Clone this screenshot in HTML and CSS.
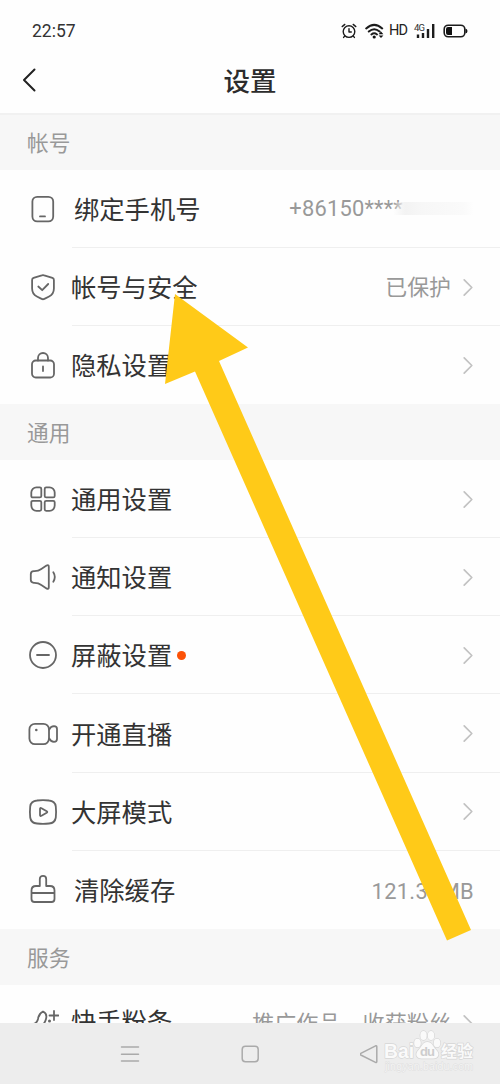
FILE: index.html
```html
<!DOCTYPE html>
<html lang="zh-CN">
<head>
<meta charset="utf-8">
<title>设置</title>
<link rel="stylesheet" href="styles.css">
</head>
<body>
<div class="screen">
  <header class="status">
    <span class="clock">22:57</span>
    <div class="status-icons">
      <svg class="alarm" width="16" height="16" viewBox="0 0 16 16"><circle cx="8" cy="8.6" r="5.8"/><path d="M8 5.6v3.4h2.3M1.2 3.6l2.6-2.2M14.8 3.6l-2.6-2.2M3.8 13l-1.2 1.4M12.2 13l1.2 1.4"/></svg>
      <svg class="wifi" width="20" height="16" viewBox="0 0 20 16"><path d="M1.200 5.400q8-7 16 0M3.800 8.500q5.400-4.500 10.800 0M6.400 11.400q2.800-2.300 5.600 0"/><circle class="solid" cx="9.200" cy="14" r="1.600"/><path class="solid" d="M13.600 11.200l2.400-2.700 2.400 2.700zM13.600 12.400l2.400 2.700 2.400-2.700z"/></svg>
      <span class="hd">HD</span>
      <div class="mobile"><span class="g4">4G</span><svg width="22" height="16" viewBox="0 0 22 16"><path d="M4 11.500v3.500M9 10v5M14 6v9M19.200 1v14"/></svg></div>
      <svg class="battery" width="25" height="14" viewBox="0 0 25 14"><rect x="1.200" y="1.200" width="20.600" height="11.600" rx="4"/><path class="solid" d="M5 3h4v8H5a2 2 0 0 1-2-2V5a2 2 0 0 1 2-2zM22.500 4.500q2 .5 2 2.500t-2 2.500z"/></svg>
    </div>
  </header>
  <div class="titlebar">
    <svg class="back" width="16" height="26" viewBox="0 0 16 26"><path d="M12.500 2.500L2 13l10.500 10.500"/></svg>
    <h1 class="title">设置</h1>
  </div>

  <h2 class="section first">帐号</h2>
  <div class="group">
    <div class="row shifted">
      <svg class="icon" viewBox="0 0 32 32"><rect x="5.400" y="3.800" width="20.800" height="24.600" rx="4.800"/><path d="M13 23.400h5"/></svg>
      <div class="cell"><span class="label">绑定手机号</span><span class="value phone">+86150****<i class="smear"></i></span></div>
    </div>
    <div class="row">
      <svg class="icon" viewBox="0 0 32 32"><path d="M14.800 4.300q1.200-.5 2.400 0l8.200 2.600q1.500.5 1.500 2v8.600q0 5.500-4.800 8l-4.700 2.400q-1.400.7-2.800 0l-4.700-2.400q-4.800-2.500-4.800-8V8.900q0-1.500 1.500-2z"/><path d="M11.300 15.500l3.900 3.700 6-6.200"/></svg>
      <div class="cell"><span class="label">帐号与安全</span><span class="value">已保护</span><svg class="chev" viewBox="0 0 12 20"><path d="M2 2l8 8-8 8"/></svg></div>
    </div>
    <div class="row">
      <svg class="icon" viewBox="0 0 32 32"><rect x="5" y="11.500" width="22" height="17" rx="3.800"/><path d="M11 11.500V9a5 5 0 0 1 10 0v2.500M16 17.500v4.500"/></svg>
      <div class="cell"><span class="label">隐私设置</span><svg class="chev" viewBox="0 0 12 20"><path d="M2 2l8 8-8 8"/></svg></div>
    </div>
  </div>

  <h2 class="section">通用</h2>
  <div class="group general">
    <div class="row">
      <svg class="icon" viewBox="0 0 32 32"><path d="M9.500 4.400h3.300q1.500 0 1.500 1.500v7q0 1.500-1.500 1.500h-7q-1.500 0-1.500-1.500V9.600a5.200 5.200 0 0 1 5.200-5.200zM22.500 4.400h-3.300q-1.500 0-1.500 1.500v7q0 1.500 1.500 1.500h7q1.500 0 1.500-1.500V9.600a5.200 5.200 0 0 0-5.200-5.200zM9.500 27.800h3.300q1.500 0 1.500-1.500v-7q0-1.500-1.500-1.500h-7q-1.500 0-1.500 1.500v3.300a5.200 5.200 0 0 0 5.200 5.200zM22.500 27.800h-3.300q-1.500 0-1.500-1.500v-7q0-1.500 1.500-1.500h7q1.500 0 1.500 1.500v3.300a5.200 5.200 0 0 1-5.200 5.200z"/></svg>
      <div class="cell"><span class="label">通用设置</span><svg class="chev" viewBox="0 0 12 20"><path d="M2 2l8 8-8 8"/></svg></div>
    </div>
    <div class="row">
      <svg class="icon" viewBox="0 0 32 32"><path d="M6.800 10.200q4.500.2 7.500-2.200l5.200-3.400q2.300-1.200 2.300 1.200v20.400q0 2.400-2.300 1.200L14.300 24q-3-2.400-7.500-2.200-3-.3-3-2.800v-6q0-2.500 3-2.800zM26.300 11.300q3 4.700 0 9.400"/></svg>
      <div class="cell"><span class="label">通知设置</span><svg class="chev" viewBox="0 0 12 20"><path d="M2 2l8 8-8 8"/></svg></div>
    </div>
    <div class="row">
      <svg class="icon" viewBox="0 0 32 32"><circle cx="16" cy="16" r="13"/><path d="M10 16h12"/></svg>
      <div class="cell"><span class="label">屏蔽设置</span><span class="dot"></span><svg class="chev" viewBox="0 0 12 20"><path d="M2 2l8 8-8 8"/></svg></div>
    </div>
    <div class="row">
      <svg class="icon" viewBox="0 0 32 32"><rect x="2.400" y="5.800" width="19.600" height="20.400" rx="5.600"/><path d="M22.200 11.500q1.500-3 4.800-3.300 3 0 3 2.800v10q0 2.800-3 2.800-3.300-.3-4.800-3.300"/><circle class="solid" cx="9.300" cy="12" r="1.300"/></svg>
      <div class="cell"><span class="label">开通直播</span><svg class="chev" viewBox="0 0 12 20"><path d="M2 2l8 8-8 8"/></svg></div>
    </div>
    <div class="row">
      <svg class="icon" viewBox="0 0 32 32"><path d="M10 4.500q6-.7 12 0 6 .5 6.800 6 .6 5.500 0 11-.8 5.500-6.800 6-6 .7-12 0-6-.5-6.800-6-.6-5.500 0-11 .8-5.500 6.800-6z"/><path d="M13 13v6q0 1.500 1.500.8l5.200-3q1.200-.8 0-1.600l-5.200-3Q13 11.500 13 13z"/></svg>
      <div class="cell"><span class="label">大屏模式</span><svg class="chev" viewBox="0 0 12 20"><path d="M2 2l8 8-8 8"/></svg></div>
    </div>
    <div class="row shifted">
      <svg class="icon" viewBox="0 0 32 32"><path d="M12.800 12V5a3.200 3.200 0 0 1 6.400 0v7h3.800q4.500 0 4.500 4.500v8.500q0 3-3 3h-17q-3 0-3-3v-8.500Q4.500 12 9 12zM4.500 19h23"/></svg>
      <div class="cell"><span class="label">清除缓存</span><span class="value size">121.35MB</span></div>
    </div>
  </div>

  <h2 class="section">服务</h2>
  <div class="clip">
    <div class="row">
      <svg class="icon" viewBox="0 0 32 32"><path d="M6 17q4-.5 5-5 .8-5.500 5-7.500 4.500 2 3 7.500-.8 3-2.500 5M27 4v9M22.500 8.500h9"/><circle class="solid" cx="22.500" cy="14" r="1.500"/></svg>
      <div class="cell"><span class="label">快手粉条</span><span class="value">推广作品，收获粉丝</span><svg class="chev" viewBox="0 0 12 20"><path d="M2 2l8 8-8 8"/></svg></div>
    </div>
  </div>

  <nav class="navbar">
    <svg width="20" height="20" viewBox="0 0 20 20"><path d="M1.500 3h17M1.500 10.200h17M1.500 17h17"/></svg>
    <svg width="20" height="20" viewBox="0 0 20 20"><rect x="2.200" y="2.200" width="16" height="15.600" rx="3.200"/></svg>
    <svg width="20" height="20" viewBox="0 0 20 20"><path d="M15.600 1.800q1.200-.4 1.200 1v14.700q0 1.500-1.300.8L.8 11q-1.300-.8 0-1.600z"/></svg>
  </nav>

  <svg class="pointer" viewBox="0 0 500 1084"><path d="M175 294L248 347.500 219 361 471 930 447 940.500 195 371.500 165 384z"/></svg>

  <svg class="watermark" viewBox="0 0 100 50">
    <text class="brand" x="3" y="35" textLength="30" lengthAdjust="spacingAndGlyphs">Bai</text>
    <g class="paw"><ellipse cx="36.500" cy="20" rx="3.300" ry="4.300"/><ellipse cx="42.500" cy="12.500" rx="3.200" ry="4.500"/><ellipse cx="50" cy="12.500" rx="3.200" ry="4.500"/><ellipse cx="56" cy="20" rx="3.300" ry="4.300"/><path d="M46.300 19c5 0 5 4 9 8s2 8.500-3 8.500H40.500c-5 0-7-4.500-3-8.500s4-8 8.800-8z"/></g>
    <text class="du" x="39" y="33" textLength="15">du</text>
    <text class="cn" x="60" y="34" textLength="32" lengthAdjust="spacingAndGlyphs">经验</text>
    <text class="url" x="4" y="47" textLength="88">jingyan.baidu.com</text>
  </svg>
</div>
</body>
</html>
```
FILE: styles.css
```css
* { box-sizing: border-box; }
body {
  margin: 0;
  background: #fff;
  font-family: Roboto, "Noto Sans CJK SC", sans-serif;
  color: #333;
}
.screen {
  position: relative;
  width: 500px;
  height: 1084px;
  overflow: hidden;
  display: flex;
  flex-direction: column;
  background: #fefefe;
}
svg { flex: none; fill: none; stroke-linecap: round; stroke-linejoin: round; }

.status {
  height: 50px;
  padding: 11px 32px 0 32px;
  display: flex;
  align-items: center;
  justify-content: space-between;
}
.clock { font-size: 17.500px; color: #333; }
.status-icons { display: flex; align-items: center; }
.status-icons svg { stroke: #1c1c1c; stroke-width: 1.400; }
.status-icons .solid { fill: #111; stroke: none; }
.alarm { margin-right: 8px; }
.status-icons .wifi { stroke-width: 2; margin-right: 4px; }
.hd {
  width: 19px;
  margin-right: 6px;
  font-size: 14.500px;
  letter-spacing: -.8px;
  line-height: 16px;
  color: #222;
}
.mobile { position: relative; width: 22px; height: 16px; margin-right: 7px; }
.mobile .g4 {
  position: absolute;
  left: 0;
  top: 0;
  font-size: 9.500px;
  line-height: 9px;
  letter-spacing: -.8px;
}
.status-icons .mobile svg { display: block; stroke-width: 2.400; stroke-linecap: butt; }
.status-icons .battery { stroke-width: 1.600; }

.titlebar {
  height: 63px;
  padding-left: 22px;
  display: grid;
  grid-template-columns: 16px 1fr 38px;
  align-items: center;
}
.back { stroke: #222; stroke-width: 2; margin-top: -4px; }
.title {
  margin: 0;
  text-align: center;
  font-size: 26.500px;
  line-height: 64px;
  height: 63px;
  font-weight: 500;
  color: #2c2c2c;
}
.section {
  margin: 0;
  height: 56px;
  flex: none;
  padding: 0 27px;
  font-size: 21.700px;
  line-height: 60px;
  font-weight: 400;
  color: #999;
  background: #f7f7f7;
}
.first { height: 57px; border-top: 2px solid #f1f1f1; line-height: 58px; }
.group { flex: none; height: 234px; display: grid; grid-auto-rows: 1fr; }
.general { height: 469px; }
.row { display: flex; align-items: center; padding-left: 27px; min-height: 0; }
.icon { width: 32px; height: 32px; stroke: #666; stroke-width: 1.800; margin-right: 13px; }
.icon .solid { fill: #666; stroke: none; }
.cell {
  flex: 1;
  height: 100%;
  padding-right: 26px;
  display: flex;
  align-items: center;
  border-bottom: 1px solid #efefef;
}
.row:last-child .cell { border-bottom-color: transparent; }
.label {
  margin-left: -1px;
  padding-top: 5px;
  font-size: 25.300px;
  line-height: 36px;
  white-space: nowrap;
}
.shifted .label { padding-left: 3px; }
.value {
  margin-left: auto;
  padding-top: 3px;
  font-size: 21.900px;
  line-height: 30px;
  color: #999;
  white-space: nowrap;
}
.size { padding-top: 5px; letter-spacing: .3px; }
.chev { width: 12px; height: 19px; margin: 1px 0 0 auto; stroke: #c2c2c2; stroke-width: 1.800; }
.value + .chev { margin-left: 11px; }
.dot { width: 9px; height: 9px; margin: 1px 0 0 5px; border-radius: 50%; background: #fc5207; }
.phone { display: flex; letter-spacing: .2px; padding-top: 1px; }
.smear {
  width: 81px;
  height: 13px;
  margin: 8px 0 0 -10px;
  background: linear-gradient(90deg, #f3f3f300, #f3f3f3 12px, #f7f7f7 30px, #fafafa 70px, #fefefe);
}
.clip { height: 38px; flex: none; overflow: hidden; }
.clip .row { height: 76px; }
.clip .label { padding-top: 1px; }
.clip .value { font-size: 22.100px; padding-top: 0; }

.navbar {
  flex: 1;
  padding: 0 120px;
  display: flex;
  justify-content: space-between;
  align-items: center;
  background: #ededed;
}
.navbar svg { stroke: #aaa; stroke-width: 1.500; }
.pointer { position: absolute; left: 0; top: 0; width: 500px; height: 1084px; }
.pointer path { fill: #ffca18; }

.watermark { position: absolute; left: 381px; top: 1023px; width: 100px; height: 50px; }
.watermark text, .paw { fill: #fafafa; stroke: #d6d6d6; stroke-width: 1.400; paint-order: stroke; }
.brand { font: 700 21px "Liberation Sans", sans-serif; }
.watermark .du { font: 700 13px "Liberation Sans", sans-serif; fill: #cdcdcd; stroke: none; }
.cn { font: 700 16px "Noto Sans CJK SC", sans-serif; }
.watermark .url { font: 400 10.500px "Liberation Sans", sans-serif; stroke: #dcdcdc; stroke-width: .8; fill: #f4f4f4; }
```
